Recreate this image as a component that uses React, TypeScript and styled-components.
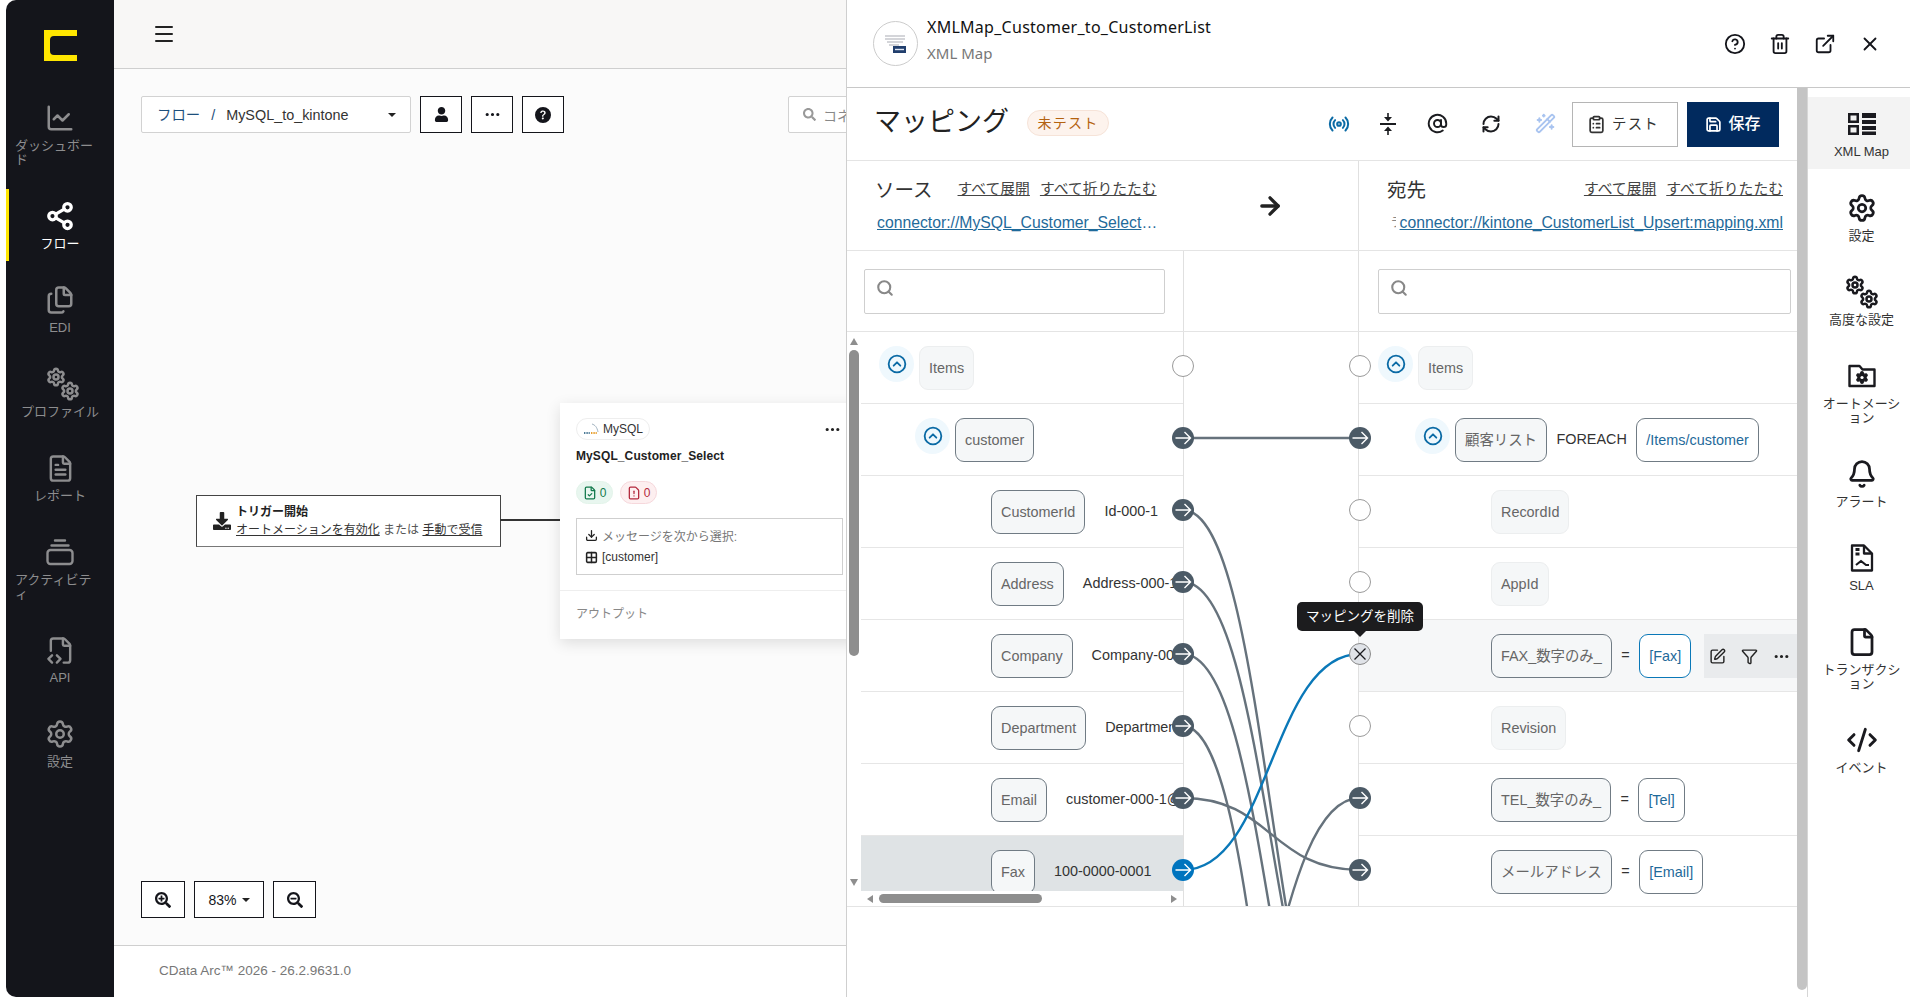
import React from 'react'
import styled, { createGlobalStyle } from 'styled-components'
import {
	ArrowRight, AtSign, Bell, ChartLine, CircleChevronUp, CircleHelp, ClipboardList, CodeXml, Download,
	ExternalLink, File, FileCheck, FileCode2, Files, FileText, FileWarning, Funnel, Grid2x2, Menu, Radio,
	RefreshCw, Save, Search, Settings, Share2, SquarePen, Trash2, WandSparkles, X
} from 'lucide-react'
import { FaDownload, FaSearch, FaSearchMinus, FaSearchPlus, FaUser } from 'react-icons/fa'
import { BsQuestionCircleFill, BsThreeDots } from 'react-icons/bs'

const FONT = `"Liberation Sans", "Noto Sans CJK JP", sans-serif`

const GlobalStyle = createGlobalStyle`
	html, body {
		margin: 0;
		padding: 0;
		background: #fff;
		font-family: ${FONT};
		color: #222;
		overflow: hidden;
	}
	* { box-sizing: border-box; }
`

const Page = styled.div`
	position: relative;
	display: flex;
	width: 1910px;
	height: 997px;
	padding-left: 6px;
	overflow: hidden;
`

/* left navigation */
const Sidebar = styled.nav`
	flex: 0 0 108px;
	display: flex;
	flex-direction: column;
	background: #14151b;
	border-radius: 10px 0 0 10px;
`
const LogoBox = styled.div`
	display: flex;
	justify-content: center;
	padding-top: 30px;
	height: 91px;
`
const NavList = styled.div`
	display: flex;
	flex-direction: column;
	gap: 12px;
`
const NavEntry = styled.div<{ $active?: boolean }>`
	display: flex;
	flex-direction: column;
	align-items: center;
	padding: 12px 0 10px;
	color: ${({ $active }) => ($active ? '#fff' : '#8d8d8f')};
	box-shadow: ${({ $active }) => ($active ? 'inset 3px 0 0 #ffe600' : 'none')};
`
const IconBox = styled.div`
	height: 30px;
	display: flex;
	align-items: center;
	justify-content: center;
	margin-bottom: 6px;
`
const NavLabel = styled.div<{ $wide?: boolean }>`
	max-width: 90px;
	width: ${({ $wide }) => ($wide ? '90px' : 'auto')};
	font-size: 13px;
	line-height: 14px;
	text-align: left;
	white-space: pre-line;
	word-break: break-all;
`
const GearShift = styled.span`
	display: flex;
	margin-left: 5px;
`

/* flow page */
const Main = styled.div`
	flex: 1;
	min-width: 0;
	display: flex;
	flex-direction: column;
`
const TopBar = styled.header`
	height: 69px;
	flex: none;
	display: flex;
	align-items: center;
	padding-left: 38px;
	background: #f8f7f6;
	border-bottom: 1px solid #cfcfcf;
	color: #222;
`
const Canvas = styled.div`
	position: relative;
	flex: 1;
	background: #fbfbfb;
	overflow: hidden;
`
const Toolbar = styled.div`
	display: flex;
	gap: 9px;
	padding: 27px 0 0 27px;
`
const FlowSelect = styled.div`
	flex: none;
	width: 270px;
	height: 37px;
	display: flex;
	align-items: center;
	padding: 0 14px 0 15px;
	background: #fff;
	border: 1px solid #d2d2d2;
	border-radius: 2px;
	font-size: 14.4px;
	line-height: 20px;
	color: #333;
`
const Crumb = styled.span`
	color: #1d4f7c;
	margin-right: 11px;
`
const Caret = styled.span`
	width: 0;
	height: 0;
	margin-left: auto;
	border-left: 4px solid transparent;
	border-right: 4px solid transparent;
	border-top: 4px solid #222;
`
const ZoomCaret = styled(Caret)`
	margin-left: 0;
`
const SquareButton = styled.button<{ $w?: number }>`
	flex: none;
	width: ${({ $w }) => $w ?? 42}px;
	height: 37px;
	display: flex;
	align-items: center;
	justify-content: center;
	gap: 5px;
	padding: 0;
	background: #fff;
	border: 1px solid #14151b;
	color: #14151b;
	font-family: ${FONT};
	font-size: 14px;
`
const ConnectorSearch = styled.div`
	flex: none;
	width: 300px;
	height: 37px;
	margin-left: 215px;
	display: flex;
	align-items: center;
	gap: 7px;
	padding-left: 14px;
	background: #fff;
	border: 1px solid #d2d2d2;
	border-radius: 2px;
	font-size: 14px;
	color: #888;
`
const ZoomBar = styled.div`
	position: absolute;
	left: 27px;
	bottom: 27px;
	display: flex;
	gap: 9px;
`
const TriggerNode = styled.div`
	position: absolute;
	left: 82px;
	top: 426px;
	width: 305px;
	height: 52px;
	display: flex;
	align-items: center;
	gap: 5px;
	padding-left: 16px;
	background: #fff;
	border: 1px solid #444;
	border-bottom-color: #777;
	font-size: 12px;
`
const TriggerTitle = styled.div`
	font-weight: 700;
	line-height: 18px;
`
const TriggerText = styled.div`
	line-height: 18px;
	color: #555;
	white-space: nowrap;
`
const Under = styled.span`
	text-decoration: underline;
	color: #333;
`
const Wire = styled.div`
	position: absolute;
	left: 386px;
	top: 450px;
	width: 60px;
	height: 2px;
	background: #333;
`
const ConnectorCard = styled.div`
	position: absolute;
	left: 446px;
	top: 334px;
	width: 299px;
	height: 236px;
	padding: 15px 0 0;
	background: #fff;
	box-shadow: 0 4px 14px rgba(0, 0, 0, 0.12);
`
const CardTop = styled.div`
	display: flex;
	align-items: center;
	justify-content: space-between;
	padding: 0 18px 0 16px;
`
const Pill = styled.div`
	height: 22px;
	width: 74px;
	display: flex;
	align-items: center;
	justify-content: center;
	gap: 2px;
	border: 1px solid #eee;
	border-radius: 11px;
	font-size: 12px;
	color: #333;
`
const CardTitle = styled.div`
	margin: 7px 0 0 16px;
	font-size: 12px;
	line-height: 18px;
	font-weight: 700;
	letter-spacing: 0.1px;
	color: #222;
`
const Counters = styled.div`
	display: flex;
	gap: 7px;
	margin: 16px 0 0 16px;
`
const Counter = styled.div<{ $bad?: boolean }>`
	width: 37px;
	height: 23px;
	display: flex;
	align-items: center;
	justify-content: center;
	gap: 3px;
	border-radius: 12px;
	border: 1px solid ${({ $bad }) => ($bad ? '#f6d8dc' : '#e3f4ea')};
	background: ${({ $bad }) => ($bad ? '#fdeff0' : '#e8f6ef')};
	color: ${({ $bad }) => ($bad ? '#b3283c' : '#137a4d')};
	font-size: 12px;
`
const SourceBox = styled.div`
	margin: 14px 0 0 16px;
	width: 267px;
	height: 57px;
	padding: 5px 0 0 8px;
	border: 1px solid #cfcfcf;
	font-size: 12px;
`
const SourceLine = styled.div<{ $muted?: boolean }>`
	height: 22px;
	display: flex;
	align-items: center;
	gap: 4px;
	color: ${({ $muted }) => ($muted ? '#777' : '#333')};
	white-space: nowrap;
`
const CardFoot = styled.div`
	margin-top: 15px;
	padding: 13px 16px 0;
	border-top: 1px solid #eee;
	font-size: 12px;
	color: #888;
`
const Footer = styled.footer`
	height: 52px;
	flex: none;
	display: flex;
	align-items: center;
	padding: 0 0 2px 45px;
	background: #fff;
	border-top: 1px solid #cfcfcf;
	font-size: 13.5px;
	color: #777;
`

/* mapping drawer */
const Drawer = styled.aside`
	position: absolute;
	top: 0;
	right: 0;
	bottom: 0;
	width: 1064px;
	display: flex;
	flex-direction: column;
	background: #fff;
	border-left: 1px solid #cfcfcf;
`
const DrawerHeader = styled.div`
	height: 88px;
	flex: none;
	display: flex;
	align-items: center;
	padding: 0 29px 0 26px;
	border-bottom: 1px solid #c8c8c8;
`
const BadgeCircle = styled.div`
	width: 45px;
	height: 45px;
	display: flex;
	align-items: center;
	justify-content: center;
	border: 1px solid #ccc;
	border-radius: 50%;
`
const HeaderText = styled.div`
	margin: -8px 0 0 9px;
	font-family: "Noto Sans", "Noto Sans CJK JP", sans-serif;
`
const HeaderTitle = styled.div`
	font-size: 16px;
	line-height: 26px;
	letter-spacing: 0.27px;
	color: #111;
`
const HeaderSub = styled.div`
	font-size: 15px;
	line-height: 26px;
	color: #777;
`
const HeaderActions = styled.div`
	margin-left: auto;
	display: flex;
	gap: 23px;
	color: #14151b;
`
const DrawerBody = styled.div`
	flex: 1;
	min-height: 0;
	display: flex;
`
const Content = styled.div`
	flex: 0 0 950px;
	min-width: 0;
	display: flex;
	flex-direction: column;
`
const Gutter = styled.div`
	flex: 0 0 10px;
	margin-bottom: 7px;
	background: #c4c4c4;
	border-radius: 0 0 5px 5px;
`
const Rail = styled.div`
	flex: 1;
	display: flex;
	flex-direction: column;
	gap: 12px;
	padding-top: 9px;
	border-left: 1px solid #d6d6d6;
`
const RailEntry = styled.div<{ $active?: boolean }>`
	display: flex;
	flex-direction: column;
	align-items: center;
	padding: 12px 0 10px 5px;
	color: #1a1a1f;
	background: ${({ $active }) => ($active ? '#f3f3f3' : 'transparent')};
`
const RailLabel = styled.div`
	max-width: 84px;
	font-size: 13px;
	line-height: 14px;
	text-align: center;
	word-break: break-all;
	color: #333;
`
const TitleRow = styled.div`
	height: 73px;
	flex: none;
	display: flex;
	align-items: center;
	padding: 0 18px 0 27px;
	border-bottom: 1px solid #e4e4e4;
`
const PageTitle = styled.h1`
	margin: 0 0 4px;
	font-size: 27px;
	line-height: 36px;
	font-weight: 400;
	color: #222;
`
const StatusPill = styled.div`
	margin: 0 0 2px 18px;
	width: 82px;
	height: 26px;
	display: flex;
	align-items: center;
	justify-content: center;
	background: #fdf3ed;
	border: 1px solid #f6e3d8;
	border-radius: 13px;
	font-size: 14px;
	line-height: 20px;
	letter-spacing: 1.2px;
	color: #b4620f;
`
const ToolIcons = styled.div`
	margin-left: auto;
	display: grid;
	grid-template-columns: 55px 44px 54px 54px 54px;
	justify-items: center;
	align-items: center;
`
const ToolIcon = styled.span<{ $color?: string }>`
	display: flex;
	margin-bottom: 1px;
	color: ${({ $color }) => $color ?? '#1b1c20'};
`
const TestButton = styled.button`
	width: 106px;
	height: 45px;
	display: flex;
	align-items: center;
	justify-content: center;
	gap: 6px;
	padding: 0 4px 0 0;
	background: #fff;
	border: 1px solid #b5b5b5;
	font-family: ${FONT};
	font-size: 14.4px;
	line-height: 20px;
	letter-spacing: 1.2px;
	color: #333;
`
const SaveButton = styled.button`
	margin-left: 9px;
	width: 92px;
	height: 45px;
	display: flex;
	align-items: center;
	justify-content: center;
	gap: 6px;
	background: #012a5e;
	border: none;
	font-family: ${FONT};
	font-size: 16px;
	line-height: 20px;
	font-weight: 500;
	color: #fff;
`
const HeadRow = styled.div`
	height: 90px;
	flex: none;
	display: flex;
	border-bottom: 1px solid #e4e4e4;
`
const SourceHead = styled.div`
	flex: 0 0 512px;
	display: flex;
	align-items: center;
	padding-left: 28px;
	border-right: 1px solid #e0e0e0;
`
const SourceBlock = styled.div`
	flex: none;
	width: 283px;
`
const HeadTop = styled.div<{ $spread?: boolean }>`
	height: 24px;
	display: flex;
	align-items: center;
	white-space: nowrap;
	justify-content: ${({ $spread }) => ($spread ? 'space-between' : 'flex-start')};
`
const SideTitle = styled.span`
	flex: none;
	margin-top: 3px;
	font-size: 19.5px;
	line-height: 24px;
	color: #333;
`
const Expanders = styled.span<{ $offset?: number }>`
	flex: none;
	display: flex;
	gap: 10px;
	margin: 2px 0 0 ${({ $offset }) => $offset ?? 0}px;
`
const Expander = styled.a`
	font-size: 14.8px;
	line-height: 16px;
	color: #444;
	text-decoration: underline;
`
const FileLink = styled.div`
	margin: 11px 0 0 2px;
	height: 24px;
	font-size: 15.75px;
	line-height: 24px;
	color: #1f6a9a;
	text-decoration: underline;
	white-space: nowrap;
	overflow: hidden;
	text-overflow: ellipsis;
`
const FlowArrow = styled.div`
	margin: 0 0 0 98px;
	display: flex;
	color: #222;
`
const DestHead = styled.div`
	flex: 1;
	display: flex;
	flex-direction: column;
	justify-content: center;
	padding: 0 14px 0 28px;
	min-width: 0;
`
const DestLink = styled.div`
	margin-top: 11px;
	height: 24px;
	display: flex;
	justify-content: flex-end;
	font-size: 15.75px;
	line-height: 24px;
	color: #1f6a9a;
	white-space: nowrap;
`
const ClippedGlyph = styled.span`
	width: 5px;
	margin-right: 4px;
	overflow: hidden;
	font-size: 12px;
	color: #888;
`
const LinkText = styled.span`
	text-decoration: underline;
`
const SearchRow = styled.div`
	height: 81px;
	flex: none;
	display: grid;
	grid-template-columns: 336px 176px 1fr;
	border-bottom: 1px solid #e4e4e4;
`
const SearchCell = styled.div<{ $left: number; $right: number }>`
	padding: 18px ${({ $right }) => $right}px 0 ${({ $left }) => $left}px;
`
const MiddleCell = styled.div`
	border-left: 1px solid #e0e0e0;
	border-right: 1px solid #e0e0e0;
`
const SearchBox = styled.div`
	height: 45px;
	display: flex;
	align-items: center;
	padding: 0 0 8px 11px;
	border: 1px solid #cfcfcf;
	border-radius: 2px;
	color: #888;
`
const TreeArea = styled.div`
	position: relative;
	height: 575px;
	flex: none;
	display: grid;
	grid-template-columns: 336px 176px 1fr;
	border-bottom: 1px solid #e4e4e4;
`
const SourceCol = styled.div`
	display: flex;
	flex-direction: column;
	min-width: 0;
`
const SourceBody = styled.div`
	height: 559px;
	display: flex;
`
const VBar = styled.div`
	flex: 0 0 14px;
	display: flex;
	flex-direction: column;
	align-items: center;
	padding: 6px 0 5px;
`
const VThumb = styled.div`
	width: 10px;
	height: 306px;
	margin-top: 5px;
	background: #8e8e8e;
	border-radius: 5px;
`
const Triangle = styled.span<{ $dir: 'up' | 'down' | 'left' | 'right' }>`
	flex: none;
	width: 0;
	height: 0;
	${({ $dir }) => ($dir === 'up' || $dir === 'down'
		? 'border-left: 4px solid transparent; border-right: 4px solid transparent;'
		: 'border-top: 4px solid transparent; border-bottom: 4px solid transparent;')}
	${({ $dir }) => $dir === 'up' && 'border-bottom: 7px solid #8e8e8e;'}
	${({ $dir }) => $dir === 'down' && 'border-top: 7px solid #8e8e8e; margin-top: auto;'}
	${({ $dir }) => $dir === 'left' && 'border-right: 6px solid #8e8e8e;'}
	${({ $dir }) => $dir === 'right' && 'border-left: 6px solid #8e8e8e; margin-left: auto;'}
`
const RowList = styled.div`
	flex: 1;
	min-width: 0;
	overflow: hidden;
`
const HBar = styled.div`
	height: 15px;
	display: flex;
	align-items: center;
	padding: 0 6px 0 20px;
`
const HThumb = styled.div`
	width: 163px;
	height: 9px;
	margin-left: 6px;
	background: #8e8e8e;
	border-radius: 5px;
`
const ConnectorCol = styled.div`
	border-left: 1px solid #e0e0e0;
	border-right: 1px solid #e0e0e0;
`
const Row = styled.div<{ $indent: number; $bg?: string; $bare?: boolean }>`
	position: relative;
	height: 72px;
	display: flex;
	align-items: flex-start;
	padding: 14px 0 0 ${({ $indent }) => $indent}px;
	background: ${({ $bg }) => $bg ?? 'transparent'};
	border-bottom: ${({ $bare }) => ($bare ? 'none' : '1px solid #e6e6e6')};
	overflow: hidden;
`
const Toggle = styled.span`
	flex: none;
	width: 35px;
	height: 36px;
	margin-right: 5px;
	display: flex;
	align-items: center;
	justify-content: center;
	background: #eff8fd;
	border-radius: 50%;
	color: #0a6aa5;
`
const Chip = styled.span<{ $tone?: 'plain' | 'mapped' | 'link' | 'active' }>`
	flex: none;
	height: 44px;
	display: flex;
	align-items: center;
	padding: 0 9px;
	border-radius: 9px;
	font-size: 14.4px;
	line-height: 20px;
	white-space: nowrap;
	border: 1px solid ${({ $tone }) => (
		$tone === 'mapped' || $tone === 'link' ? '#707b84' : $tone === 'active' ? '#0a78b8' : '#eceeef')};
	background: ${({ $tone }) => ($tone === 'link' || $tone === 'active' ? '#fff' : '#f5f7f8')};
	color: ${({ $tone }) => ($tone === 'link' || $tone === 'active' ? '#1f6a9a' : '#666')};
`
const Value = styled.span`
	flex: none;
	margin-left: 19px;
	font-size: 14.4px;
	line-height: 42px;
	color: #333;
	white-space: nowrap;
`
const Keyword = styled.span`
	margin: 0 9.5px;
	font-size: 14.4px;
	line-height: 42px;
	color: #333;
`
const RowActions = styled.div`
	position: absolute;
	top: 14px;
	right: 0;
	width: 93px;
	height: 44px;
	display: flex;
	align-items: center;
	gap: 15px;
	padding-left: 5px;
	background: #e9ebed;
	color: #222;
`
const Overlay = styled.svg`
	position: absolute;
	left: 324px;
	top: 0;
	pointer-events: none;
`
const Tooltip = styled.div`
	position: absolute;
	left: 450px;
	top: 270px;
	width: 126px;
	height: 29px;
	display: flex;
	align-items: center;
	justify-content: center;
	background: #1c1c1e;
	border-radius: 5px;
	font-size: 13.5px;
	line-height: 20px;
	color: #fff;
	white-space: nowrap;
	&::after {
		content: '';
		position: absolute;
		left: 57px;
		top: 29px;
		border-left: 6px solid transparent;
		border-right: 6px solid transparent;
		border-top: 6px solid #1c1c1e;
	}
`

/* drawings */
const Logo = () => (
	<svg width="33" height="31" viewBox="0 0 33 31">
		<path fill="#ffe600" d="M0 0h33v6H10a4 4 0 0 0-4 4v11a4 4 0 0 0 4 4h23v6H0z" />
	</svg>
)

const TwoGears = ({ stroke = 3 }: { stroke?: number }) => (
	<svg width="34" height="34" viewBox="0 0 34 34">
		<Settings x={0} y={0} width={20} height={20} strokeWidth={stroke} />
		<Settings x={14} y={14} width={20} height={20} strokeWidth={stroke} />
	</svg>
)

const ActivityIcon = () => (
	<svg width="28" height="28" viewBox="0 0 28 28" fill="none" stroke="currentColor" strokeWidth="2.4" strokeLinecap="round">
		<path d="M9 2.5h10M5.5 7.5h17" />
		<rect x="1.5" y="12" width="25" height="14" rx="3" />
	</svg>
)

const LayoutIcon = () => (
	<svg width="28" height="22" viewBox="0 0 28 22" fill="#1a1a1f">
		<path fillRule="evenodd" d="M0 0h11v10H0zM2.5 2.5v5h6v-5zM0 12h11v10H0zM2.5 14.5v5h6v-5z" />
		<path d="M14 0h14v5H14zM14 7h14v4H14zM14 13h14v4H14zM14 18.5h14V22H14z" />
	</svg>
)

const FolderGear = () => (
	<svg width="28" height="24" viewBox="0 0 28 24" fill="none" stroke="#1a1a1f" strokeWidth="2.4">
		<path d="M1.5 22V2h10l3 3.5h12V22z" strokeLinejoin="round" />
		<Settings x={7} y={6.5} width={14} height={14} fill="#1a1a1f" stroke="#1a1a1f" strokeWidth={2} />
		<circle cx="14" cy="13.5" r="1.6" fill="#fff" stroke="none" />
	</svg>
)

const SlaIcon = () => (
	<svg width="24" height="28" viewBox="0 0 24 28" fill="none" stroke="#1a1a1f" strokeWidth="2.3" strokeLinejoin="round">
		<path d="M2 1.5h12l8 8v17H2z" />
		<path d="M14 1.5v8h8" />
		<path d="M5.5 5.5h4M5.5 10h4" strokeWidth="3" />
		<path d="M6 21l5-4 5 4H19" strokeWidth="2.2" />
	</svg>
)

const CollapseIcon = () => (
	<svg width="16" height="24" viewBox="0 0 16 24" fill="#1b1c20">
		<path d="M0 11h16v2H0z" />
		<path d="M7.2 1h1.6v4H12L8 9.5 4 5h3.2zM7.2 23h1.6v-4H12L8 14.5 4 19h3.2z" />
	</svg>
)

const MapBadge = () => (
	<svg width="24" height="24" viewBox="0 0 24 24" fill="none">
		<path d="M1 4h20M1 7h20M3 10h16M5 13h10" stroke="#c6c8cd" strokeWidth="1.3" />
		<rect x="9" y="14" width="13" height="7" fill="#213f6d" />
		<path d="M11 17.5h9" stroke="#dfe6f2" strokeWidth="1.4" />
	</svg>
)

const MySqlMark = () => (
	<svg width="18" height="14" viewBox="0 0 18 14" fill="none">
		<path d="M9 2c3 1 5 3 6 8" stroke="#8aa0b0" strokeWidth="0.8" />
		<path d="M1 11h6" stroke="#4d7a96" strokeWidth="2" strokeDasharray="1 0.6" />
		<path d="M8 11h6" stroke="#e8a030" strokeWidth="2" strokeDasharray="1 0.6" />
	</svg>
)

type PortKind = 'on' | 'off' | 'live' | 'remove'

const Port = ({ x, y, kind }: { x: number; y: number; kind: PortKind }) => {
	if (kind === 'off') return <circle cx={x} cy={y} r={10.5} fill="#fff" stroke="#9a9a9a" />
	if (kind === 'remove') return (
		<g>
			<circle cx={x} cy={y} r={10.5} fill="#e0e3e8" stroke="#8a8a8a" />
			<path d={`M${x - 5.5} ${y - 5.5}l11 11M${x + 5.5} ${y - 5.5}l-11 11`} stroke="#1a1a1f" strokeWidth="1.3" />
		</g>
	)
	return (
		<g>
			<circle cx={x} cy={y} r={11} fill={kind === 'live' ? '#0074be' : '#4b5a66'} />
			<path d={`M${x - 7.5} ${y}h15M${x + 1.5} ${y - 6}l6 6-6 6`} stroke="#fff" strokeWidth="1.4" fill="none" />
		</g>
	)
}

// coordinates inside the overlay: columns at x=12 and x=189, first row centre at y=34
const ROW_Y = [34, 106, 178, 250, 322, 394, 466, 538]
const LEFT_X = 12
const RIGHT_X = 189
const MID_X = 100

const curve = (y0: number, y1: number) =>
	`M${LEFT_X} ${y0}C${MID_X} ${y0} ${MID_X} ${y1} ${RIGHT_X} ${y1}`

const GREY_LINES = [
	curve(ROW_Y[1], ROW_Y[1]),
	curve(ROW_Y[2], 776),
	curve(ROW_Y[3], 767),
	curve(ROW_Y[4], 849),
	curve(ROW_Y[5], 1120),
	curve(ROW_Y[6], ROW_Y[7]),
	curve(814, ROW_Y[6]),
]

const LEFT_PORTS: PortKind[] = ['off', 'on', 'on', 'on', 'on', 'on', 'on', 'live']
const RIGHT_PORTS: PortKind[] = ['off', 'on', 'off', 'off', 'remove', 'off', 'on', 'on']

const ConnectorOverlay = () => (
	<Overlay width="212" height="574" viewBox="0 0 212 574">
		{GREY_LINES.map((d) => <path key={d} d={d} fill="none" stroke="#66727c" strokeWidth="2.4" />)}
		<path d={curve(ROW_Y[7], ROW_Y[4])} fill="none" stroke="#0a78b8" strokeWidth="2.4" />
		{ROW_Y.map((y, i) => <Port key={`l${y}`} x={LEFT_X} y={y} kind={LEFT_PORTS[i]} />)}
		{ROW_Y.map((y, i) => <Port key={`r${y}`} x={RIGHT_X} y={y} kind={RIGHT_PORTS[i]} />)}
	</Overlay>
)

const LEFT_NAV = [
	{ label: 'ダッシュボード', icon: <ChartLine size={30} strokeWidth={2} /> },
	{ label: 'フロー', icon: <Share2 size={30} strokeWidth={2.6} />, active: true },
	{ label: 'EDI', icon: <Files size={30} strokeWidth={2} /> },
	{ label: 'プロファイル', icon: <GearShift><TwoGears /></GearShift> },
	{ label: 'レポート', icon: <FileText size={29} strokeWidth={2} /> },
	{ label: 'アクティビテ\nィ', icon: <ActivityIcon />, wide: true },
	{ label: 'API', icon: <FileCode2 size={29} strokeWidth={2} /> },
	{ label: '設定', icon: <Settings size={30} strokeWidth={2} /> },
]

const RIGHT_NAV = [
	{ label: 'XML Map', icon: <LayoutIcon />, active: true },
	{ label: '設定', icon: <Settings size={30} strokeWidth={2.2} /> },
	{ label: '高度な設定', icon: <TwoGears /> },
	{ label: 'オートメーション', icon: <FolderGear /> },
	{ label: 'アラート', icon: <Bell size={30} strokeWidth={2.2} /> },
	{ label: 'SLA', icon: <SlaIcon /> },
	{ label: 'トランザクション', icon: <File size={30} strokeWidth={2.2} /> },
	{ label: 'イベント', icon: <CodeXml size={32} strokeWidth={2.2} /> },
]

const SOURCE_FIELDS = [
	{ name: 'CustomerId', value: 'Id-000-1' },
	{ name: 'Address', value: 'Address-000-1' },
	{ name: 'Company', value: 'Company-000-1' },
	{ name: 'Department', value: 'Department-000-1' },
	{ name: 'Email', value: 'customer-000-1@example.com' },
]

const TARGET_PLAIN = ['RecordId', 'AppId']

const SEARCH_ICON = <Search size={18} strokeWidth={2.8} />

const App = () => (
	<Page>
		<GlobalStyle />
		<Sidebar>
			<LogoBox><Logo /></LogoBox>
			<NavList>
				{LEFT_NAV.map((item) => (
					<NavEntry key={item.label} $active={item.active}>
						<IconBox>{item.icon}</IconBox>
						<NavLabel $wide={item.wide}>{item.label}</NavLabel>
					</NavEntry>
				))}
			</NavList>
		</Sidebar>

		<Main>
			<TopBar><Menu size={24} strokeWidth={2} /></TopBar>
			<Canvas>
				<Toolbar>
					<FlowSelect>
						<Crumb>フロー</Crumb>
						<Crumb>/</Crumb>
						<span>MySQL_to_kintone</span>
						<Caret />
					</FlowSelect>
					<SquareButton><FaUser size={15} /></SquareButton>
					<SquareButton><BsThreeDots size={17} /></SquareButton>
					<SquareButton><BsQuestionCircleFill size={16} /></SquareButton>
					<ConnectorSearch><FaSearch size={13} color="#999" />コネ</ConnectorSearch>
				</Toolbar>

				<TriggerNode>
					<FaDownload size={18} />
					<div>
						<TriggerTitle>トリガー開始</TriggerTitle>
						<TriggerText><Under>オートメーションを有効化</Under> または <Under>手動で受信</Under></TriggerText>
					</div>
				</TriggerNode>
				<Wire />
				<ConnectorCard>
					<CardTop>
						<Pill><MySqlMark />MySQL</Pill>
						<BsThreeDots size={17} />
					</CardTop>
					<CardTitle>MySQL_Customer_Select</CardTitle>
					<Counters>
						<Counter><FileCheck size={14} strokeWidth={2.2} />0</Counter>
						<Counter $bad><FileWarning size={14} strokeWidth={2.2} />0</Counter>
					</Counters>
					<SourceBox>
						<SourceLine $muted><Download size={13} strokeWidth={2.4} color="#222" />メッセージを次から選択:</SourceLine>
						<SourceLine><Grid2x2 size={13} strokeWidth={2.8} color="#222" />[customer]</SourceLine>
					</SourceBox>
					<CardFoot>アウトプット</CardFoot>
				</ConnectorCard>

				<ZoomBar>
					<SquareButton $w={44}><FaSearchPlus size={16} /></SquareButton>
					<SquareButton $w={70}>83%<ZoomCaret /></SquareButton>
					<SquareButton $w={43}><FaSearchMinus size={16} /></SquareButton>
				</ZoomBar>
			</Canvas>
			<Footer>CData Arc™ 2026 - 26.2.9631.0</Footer>
		</Main>

		<Drawer>
			<DrawerHeader>
				<BadgeCircle><MapBadge /></BadgeCircle>
				<HeaderText>
					<HeaderTitle>XMLMap_Customer_to_CustomerList</HeaderTitle>
					<HeaderSub>XML Map</HeaderSub>
				</HeaderText>
				<HeaderActions>
					<CircleHelp size={22} strokeWidth={2} />
					<Trash2 size={22} strokeWidth={2} />
					<ExternalLink size={22} strokeWidth={2} />
					<X size={22} strokeWidth={2} />
				</HeaderActions>
			</DrawerHeader>
			<DrawerBody>
				<Content>
					<TitleRow>
						<PageTitle>マッピング</PageTitle>
						<StatusPill>未テスト</StatusPill>
						<ToolIcons>
							<ToolIcon $color="#0a6aa5"><Radio size={22} strokeWidth={2.2} /></ToolIcon>
							<ToolIcon><CollapseIcon /></ToolIcon>
							<ToolIcon><AtSign size={21} strokeWidth={2.2} /></ToolIcon>
							<ToolIcon><RefreshCw size={20} strokeWidth={2.4} /></ToolIcon>
							<ToolIcon $color="#a9c4f0"><WandSparkles size={21} strokeWidth={2.2} /></ToolIcon>
						</ToolIcons>
						<TestButton><ClipboardList size={19} strokeWidth={2.2} />テスト</TestButton>
						<SaveButton><Save size={17} strokeWidth={2.4} />保存</SaveButton>
					</TitleRow>

					<HeadRow>
						<SourceHead>
							<SourceBlock>
								<HeadTop>
									<SideTitle>ソース</SideTitle>
									<Expanders $offset={25}>
										<Expander>すべて展開</Expander>
										<Expander>すべて折りたたむ</Expander>
									</Expanders>
								</HeadTop>
								<FileLink>connector://MySQL_Customer_Select:mapping.xml</FileLink>
							</SourceBlock>
							<FlowArrow><ArrowRight size={28} strokeWidth={2.8} /></FlowArrow>
						</SourceHead>
						<DestHead>
							<HeadTop $spread>
								<SideTitle>宛先</SideTitle>
								<Expanders>
									<Expander>すべて展開</Expander>
									<Expander>すべて折りたたむ</Expander>
								</Expanders>
							</HeadTop>
							<DestLink>
								<ClippedGlyph>ラ</ClippedGlyph>
								<LinkText>connector://kintone_CustomerList_Upsert:mapping.xml</LinkText>
							</DestLink>
						</DestHead>
					</HeadRow>

					<SearchRow>
						<SearchCell $left={17} $right={18}><SearchBox>{SEARCH_ICON}</SearchBox></SearchCell>
						<MiddleCell />
						<SearchCell $left={19} $right={6}><SearchBox>{SEARCH_ICON}</SearchBox></SearchCell>
					</SearchRow>

					<TreeArea>
						<SourceCol>
							<SourceBody>
								<VBar>
									<Triangle $dir="up" />
									<VThumb />
									<Triangle $dir="down" />
								</VBar>
								<RowList>
									<Row $indent={18}>
										<Toggle><CircleChevronUp size={20} strokeWidth={2.2} /></Toggle>
										<Chip>Items</Chip>
									</Row>
									<Row $indent={54}>
										<Toggle><CircleChevronUp size={20} strokeWidth={2.2} /></Toggle>
										<Chip $tone="mapped">customer</Chip>
									</Row>
									{SOURCE_FIELDS.map((field) => (
										<Row key={field.name} $indent={130}>
											<Chip $tone="mapped">{field.name}</Chip>
											<Value>{field.value}</Value>
										</Row>
									))}
									<Row $indent={130} $bg="#dfe3e5" $bare>
										<Chip $tone="mapped">Fax</Chip>
										<Value>100-0000-0001</Value>
									</Row>
								</RowList>
							</SourceBody>
							<HBar>
								<Triangle $dir="left" />
								<HThumb />
								<Triangle $dir="right" />
							</HBar>
						</SourceCol>

						<ConnectorCol />

						<RowList>
							<Row $indent={19}>
								<Toggle><CircleChevronUp size={20} strokeWidth={2.2} /></Toggle>
								<Chip>Items</Chip>
							</Row>
							<Row $indent={56}>
								<Toggle><CircleChevronUp size={20} strokeWidth={2.2} /></Toggle>
								<Chip $tone="mapped">顧客リスト</Chip>
								<Keyword>FOREACH</Keyword>
								<Chip $tone="link">/Items/customer</Chip>
							</Row>
							{TARGET_PLAIN.map((name) => (
								<Row key={name} $indent={132}><Chip>{name}</Chip></Row>
							))}
							<Row $indent={132} $bg="#f6f7f8">
								<Chip $tone="mapped">FAX_数字のみ_</Chip>
								<Keyword>=</Keyword>
								<Chip $tone="active">[Fax]</Chip>
								<RowActions>
									<SquarePen size={17} strokeWidth={2} />
									<Funnel size={17} strokeWidth={2} />
									<BsThreeDots size={17} />
								</RowActions>
							</Row>
							<Row $indent={132}><Chip>Revision</Chip></Row>
							<Row $indent={132}>
								<Chip $tone="mapped">TEL_数字のみ_</Chip>
								<Keyword>=</Keyword>
								<Chip $tone="link">[Tel]</Chip>
							</Row>
							<Row $indent={132} $bare>
								<Chip $tone="mapped">メールアドレス</Chip>
								<Keyword>=</Keyword>
								<Chip $tone="link">[Email]</Chip>
							</Row>
						</RowList>

						<ConnectorOverlay />
						<Tooltip>マッピングを削除</Tooltip>
					</TreeArea>
				</Content>
				<Gutter />
				<Rail>
					{RIGHT_NAV.map((item) => (
						<RailEntry key={item.label} $active={item.active}>
							<IconBox>{item.icon}</IconBox>
							<RailLabel>{item.label}</RailLabel>
						</RailEntry>
					))}
				</Rail>
			</DrawerBody>
		</Drawer>
	</Page>
)

export default App
